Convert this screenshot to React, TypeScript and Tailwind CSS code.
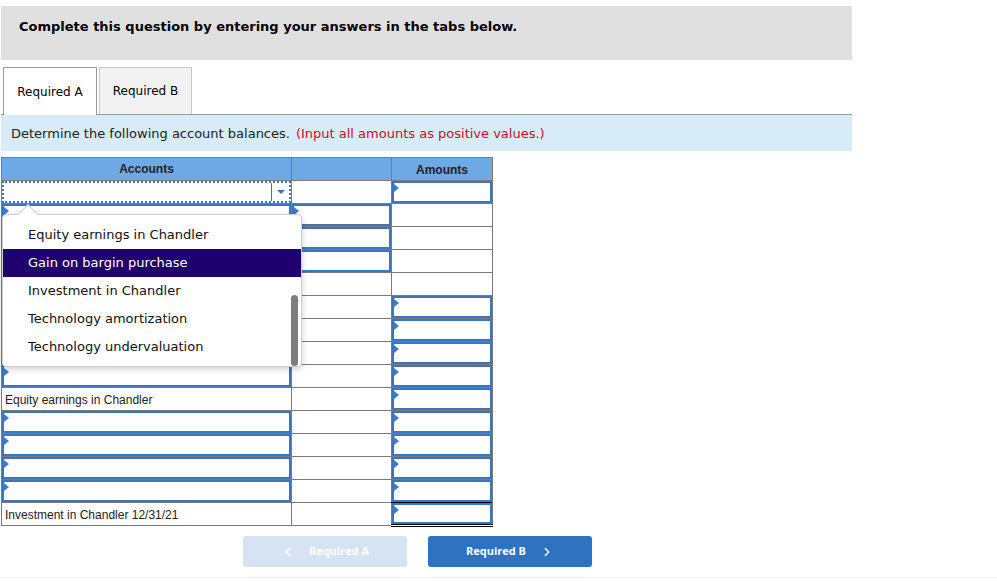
import { ChevronLeft, ChevronRight } from 'lucide-react'

type Cell =
  | { kind: 'input' }
  | { kind: 'plain' }
  | { kind: 'text'; text: string }
  | { kind: 'select' }

interface Row {
  account: Cell
  middle: Cell
  amount: Cell
  amountTotal?: boolean
}

const inp: Cell = { kind: 'input' }
const plain: Cell = { kind: 'plain' }

const rows: Row[] = [
  { account: { kind: 'select' }, middle: plain, amount: inp },
  { account: inp, middle: inp, amount: plain },
  { account: inp, middle: inp, amount: plain },
  { account: inp, middle: inp, amount: plain },
  { account: inp, middle: plain, amount: plain, amountTotal: true },
  { account: inp, middle: plain, amount: inp, amountTotal: true },
  { account: inp, middle: plain, amount: inp, amountTotal: true },
  { account: inp, middle: plain, amount: inp, amountTotal: true },
  { account: inp, middle: plain, amount: inp, amountTotal: true },
  { account: { kind: 'text', text: 'Equity earnings in Chandler' }, middle: plain, amount: inp, amountTotal: true },
  { account: inp, middle: plain, amount: inp },
  { account: inp, middle: plain, amount: inp },
  { account: inp, middle: plain, amount: inp },
  { account: inp, middle: plain, amount: inp },
  { account: { kind: 'text', text: 'Investment in Chandler 12/31/21' }, middle: plain, amount: inp, amountTotal: true },
]

const options = [
  'Equity earnings in Chandler',
  'Gain on bargin purchase',
  'Investment in Chandler',
  'Technology amortization',
  'Technology undervaluation',
]

function Marker() {
  return (
    <span className="absolute left-0 top-[1px] w-0 h-0 border-y-[4px] border-y-transparent border-l-[5px] border-l-[#3b7bd0]" />
  )
}

function CellBody({ cell }: { cell: Cell }) {
  if (cell.kind === 'input') {
    return (
      <div className="relative h-full w-full border-2 border-[#3a76c0] bg-white">
        <Marker />
      </div>
    )
  }
  if (cell.kind === 'text') {
    return <div className="h-full flex items-center pl-[3px] pt-[1px] text-[12px] text-[#222]">{cell.text}</div>
  }
  if (cell.kind === 'select') {
    return (
      <div className="h-full w-full border-2 border-dotted border-[#3a76c0] flex">
        <div className="flex-1" />
        <div className="w-[18px] border-l border-[#3a76c0] flex items-center justify-center">
          <span className="w-0 h-0 border-x-[4px] border-x-transparent border-t-[4px] border-t-[#3a76c0]" />
        </div>
      </div>
    )
  }
  return null
}

export default function App() {
  return (
    <div className="w-[997px] h-[581px] bg-white font-['DejaVu_Sans',Verdana,sans-serif] text-[#222] relative">
      <div className="pt-[6px] pl-[1px] w-[852px]">
        {/* Instruction header */}
        <div className="h-[54px] bg-[#e0e0e0] pt-[13px] pl-[18px]">
          <p className="text-[13px] font-bold text-black leading-[16px]">
            Complete this question by entering your answers in the tabs below.
          </p>
        </div>

        {/* Tabs */}
        <div className="mt-[7px] h-[48px] flex items-end pl-[2px] gap-[2px] border-b border-[#9a9a9a]">
          <div className="h-[48px] w-[94px] border border-b-0 border-[#9a9a9a] bg-white -mb-px flex items-center justify-center text-[12px] text-black">
            Required A
          </div>
          <div className="h-[47px] w-[93px] border border-b-0 border-[#c8c8c8] bg-[#f2f2f2] flex items-center justify-center text-[12px] text-black">
            Required B
          </div>
        </div>

        {/* Prompt band */}
        <div className="h-[36px] bg-[#d7ebf9] flex items-center pl-[10px] pt-[2px] text-[13px]">
          <span className="text-[#222]">Determine the following account balances.</span>
          <span className="text-[#c8102e] ml-[6px]">(Input all amounts as positive values.)</span>
        </div>
      </div>

      {/* Table */}
      <div className="relative ml-[1px] mt-[6px] w-[491px] font-['Liberation_Sans',Arial,sans-serif]">
        <table className="border-collapse table-fixed w-[491px]">
          <colgroup>
            <col className="w-[290px]" />
            <col className="w-[100px]" />
            <col className="w-[101px]" />
          </colgroup>
          <thead>
            <tr className="h-[23px] bg-[#6ea8e5]">
              <th className="border border-[#7b7b7b] text-[12px] font-bold text-[#222]">Accounts</th>
              <th className="border border-[#7b7b7b]" />
              <th className="border border-[#7b7b7b] text-[12px] font-bold text-[#222] pt-[2px]">Amounts</th>
            </tr>
          </thead>
          <tbody>
            {rows.map((r, i) => (
              <tr key={i} className="h-[23px]">
                <td className="border border-[#7b7b7b] p-0 h-[23px]">
                  <CellBody cell={r.account} />
                </td>
                <td className="border border-[#7b7b7b] p-0 h-[23px]">
                  <CellBody cell={r.middle} />
                </td>
                <td
                  className={
                    i === rows.length - 1
                      ? 'border border-[#7b7b7b] border-t-black border-b-[3px] border-b-black border-double p-0 h-[23px]'
                      : r.amountTotal
                        ? 'border border-[#7b7b7b] border-t-black p-0 h-[23px]'
                        : 'border border-[#7b7b7b] p-0 h-[23px]'
                  }
                >
                  <CellBody cell={r.amount} />
                </td>
              </tr>
            ))}
          </tbody>
        </table>

        {/* Dropdown popup */}
        <div className="absolute left-[1px] top-[57px] w-[300px] h-[153px] bg-white border border-[#cfcfcf] rounded-[4px] shadow-[0_2px_6px_rgba(0,0,0,0.2)] font-['DejaVu_Sans',Verdana,sans-serif]">
          <span className="absolute -top-[8px] left-[18px] w-[14px] h-[14px] bg-white border-l border-t border-[#cfcfcf] rotate-45 origin-center" />
          <div className="pt-[6px] relative">
            {options.map((o, i) => (
              <div
                key={o}
                className={
                  i === 1
                    ? 'h-[28px] flex items-center pl-[25px] text-[13px] bg-[#1e006e] text-white'
                    : 'h-[28px] flex items-center pl-[25px] text-[13px] text-[#111]'
                }
              >
                {o}
              </div>
            ))}
          </div>
          <div className="absolute right-[3px] top-[80px] w-[7px] h-[71px] rounded-full bg-[#7d7d7d]" />
        </div>
      </div>

      {/* Navigation buttons */}
      <div className="ml-[243px] mt-[9px] flex gap-[21px] font-['Open_Sans',sans-serif]">
        <div className="w-[164px] h-[31px] rounded-[3px] bg-[#d6e3f3] flex items-center justify-center gap-[14px] text-white text-[11px] font-bold">
          <ChevronLeft className="w-[14px] h-[14px]" strokeWidth={2.5} />
          Required A
        </div>
        <div className="w-[164px] h-[31px] rounded-[3px] bg-[#2f72bf] flex items-center justify-center gap-[14px] text-white text-[11px] font-bold">
          Required B
          <ChevronRight className="w-[14px] h-[14px]" strokeWidth={2.5} />
        </div>
      </div>
      <div className="absolute left-0 bottom-[3px] w-[997px] h-px bg-[#eeeeee]" />
    </div>
  )
}
